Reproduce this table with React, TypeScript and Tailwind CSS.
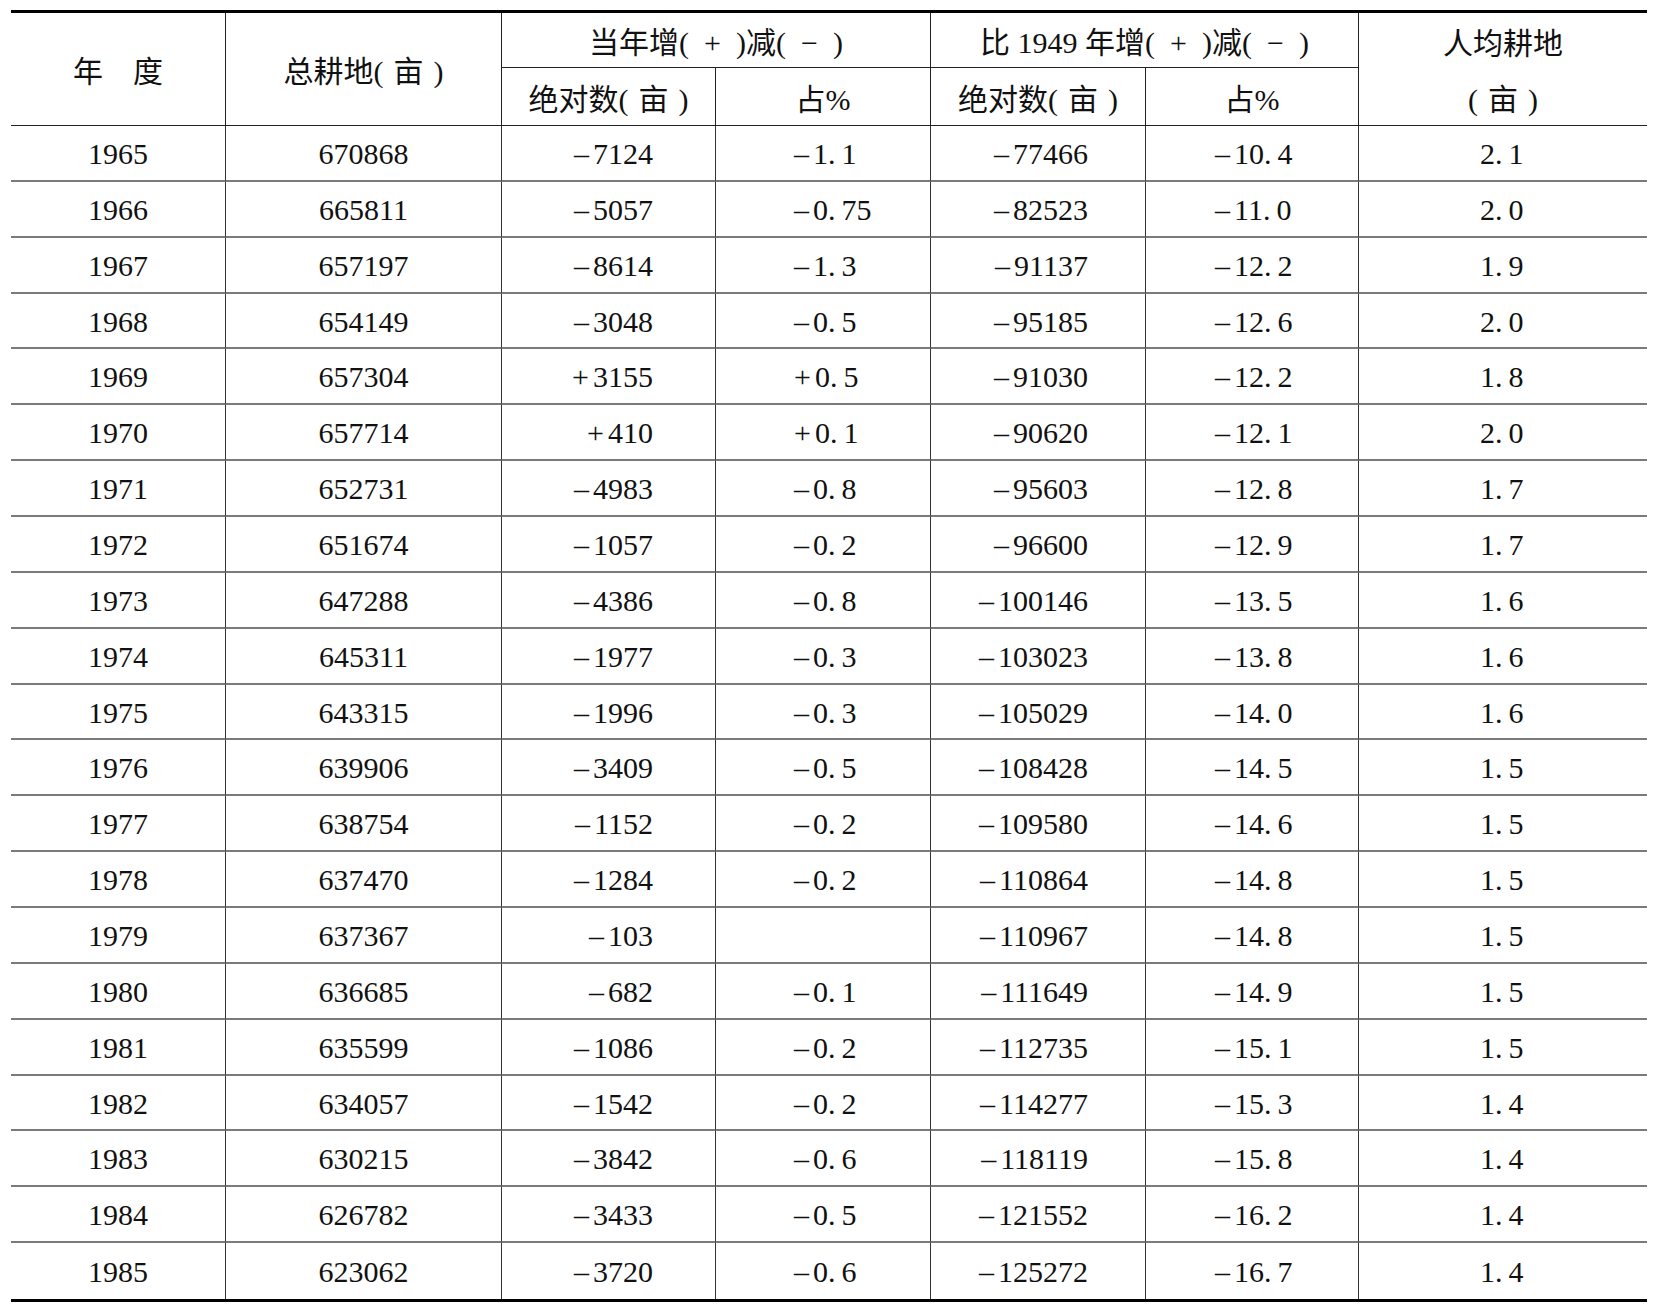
import React from 'react';

// 年度 / 总耕地 / 当年增减(绝对数, 占%) / 比1949年增减(绝对数, 占%) / 人均耕地
const rows: string[][] = [
  ['1965', '670868', '-7124', '-1.1', '-77466', '-10.4', '2.1'],
  ['1966', '665811', '-5057', '-0.75', '-82523', '-11.0', '2.0'],
  ['1967', '657197', '-8614', '-1.3', '-91137', '-12.2', '1.9'],
  ['1968', '654149', '-3048', '-0.5', '-95185', '-12.6', '2.0'],
  ['1969', '657304', '+3155', '+0.5', '-91030', '-12.2', '1.8'],
  ['1970', '657714', '+410', '+0.1', '-90620', '-12.1', '2.0'],
  ['1971', '652731', '-4983', '-0.8', '-95603', '-12.8', '1.7'],
  ['1972', '651674', '-1057', '-0.2', '-96600', '-12.9', '1.7'],
  ['1973', '647288', '-4386', '-0.8', '-100146', '-13.5', '1.6'],
  ['1974', '645311', '-1977', '-0.3', '-103023', '-13.8', '1.6'],
  ['1975', '643315', '-1996', '-0.3', '-105029', '-14.0', '1.6'],
  ['1976', '639906', '-3409', '-0.5', '-108428', '-14.5', '1.5'],
  ['1977', '638754', '-1152', '-0.2', '-109580', '-14.6', '1.5'],
  ['1978', '637470', '-1284', '-0.2', '-110864', '-14.8', '1.5'],
  ['1979', '637367', '-103', '', '-110967', '-14.8', '1.5'],
  ['1980', '636685', '-682', '-0.1', '-111649', '-14.9', '1.5'],
  ['1981', '635599', '-1086', '-0.2', '-112735', '-15.1', '1.5'],
  ['1982', '634057', '-1542', '-0.2', '-114277', '-15.3', '1.4'],
  ['1983', '630215', '-3842', '-0.6', '-118119', '-15.8', '1.4'],
  ['1984', '626782', '-3433', '-0.5', '-121552', '-16.2', '1.4'],
  ['1985', '623062', '-3720', '-0.6', '-125272', '-16.7', '1.4'],
];

// alignment per column
const align = [
  'justify-center',
  'justify-center',
  'justify-end pr-[62px]',
  'justify-start pl-[78px]',
  'justify-end pr-[57px]',
  'justify-start pl-[69px]',
  'justify-start pl-[121px]',
];

function Num({ value }: { value: string }) {
  if (!value) return null;
  let sign = '';
  let rest = value;
  if (value[0] === '-' || value[0] === '+') {
    sign = value[0] === '-' ? '\u2013' : '+';
    rest = value.slice(1);
  }
  const [intPart, dec] = rest.split('.');
  return (
    <span className="whitespace-nowrap">
      {sign && <span className="mr-[4px]">{sign}</span>}
      {intPart}
      {dec !== undefined && (
        <>
          .<span className="ml-[6px]">{dec}</span>
        </>
      )}
    </span>
  );
}

export default function App() {
  const font = { fontFamily: '"Liberation Serif", "Noto Sans CJK SC", serif' };
  const last = rows.length - 1;
  const head = 'flex items-center justify-center pt-[6px] border-b border-[#222]';

  return (
    <div className="min-h-screen bg-white text-[#111]" style={font}>
      <div className="pt-[10px] pl-[11px]">
        <div className="grid w-[1636px] grid-cols-[215px_276px_214px_215px_215px_213px_288px] grid-rows-[55px_58px_repeat(21,55.86px)] border-t-[3px] border-b-[3px] border-black text-[30px] leading-none">
          {/* header */}
          <div className={`row-span-2 col-start-1 row-start-1 border-r ${head}`}>年{'\u3000'}度</div>
          <div className={`row-span-2 col-start-2 row-start-1 border-r ${head}`}>
            总耕地({'\u2004'}亩{'\u2004'})
          </div>
          <div className={`col-span-2 col-start-3 row-start-1 border-r ${head}`}>
            当年增({'\u2002'}+{'\u2002'})减({'\u2002'}−{'\u2002'})
          </div>
          <div className={`col-span-2 col-start-5 row-start-1 border-r ${head}`}>
            比 1949 年增({'\u2002'}+{'\u2002'})减({'\u2002'}−{'\u2002'})
          </div>
          <div className="row-span-2 col-start-7 row-start-1 grid grid-rows-[55px_58px] border-b border-[#222]">
            <div className="flex items-center justify-center pt-[6px]">人均耕地</div>
            <div className="flex items-center justify-center pt-[6px]">({'\u2004'}亩{'\u2004'})</div>
          </div>
          <div className={`col-start-3 row-start-2 border-r ${head}`}>绝对数({'\u2004'}亩{'\u2004'})</div>
          <div className={`col-start-4 row-start-2 border-r ${head}`}>占%</div>
          <div className={`col-start-5 row-start-2 border-r ${head}`}>绝对数({'\u2004'}亩{'\u2004'})</div>
          <div className={`col-start-6 row-start-2 border-r ${head}`}>占%</div>

          {/* body */}
          {rows.map((r, i) => (
            <React.Fragment key={r[0]}>
              {r.map((v, j) => (
                <div
                  key={j}
                  className={`flex items-center pt-[2px] ${align[j]} ${j < 6 ? 'border-r border-r-[#333]' : ''} ${
                    i < last ? 'border-b-2 border-b-[#7a7a7a]' : ''
                  }`}
                >
                  {j < 2 ? v : <Num value={v} />}
                </div>
              ))}
            </React.Fragment>
          ))}
        </div>
      </div>
    </div>
  );
}
